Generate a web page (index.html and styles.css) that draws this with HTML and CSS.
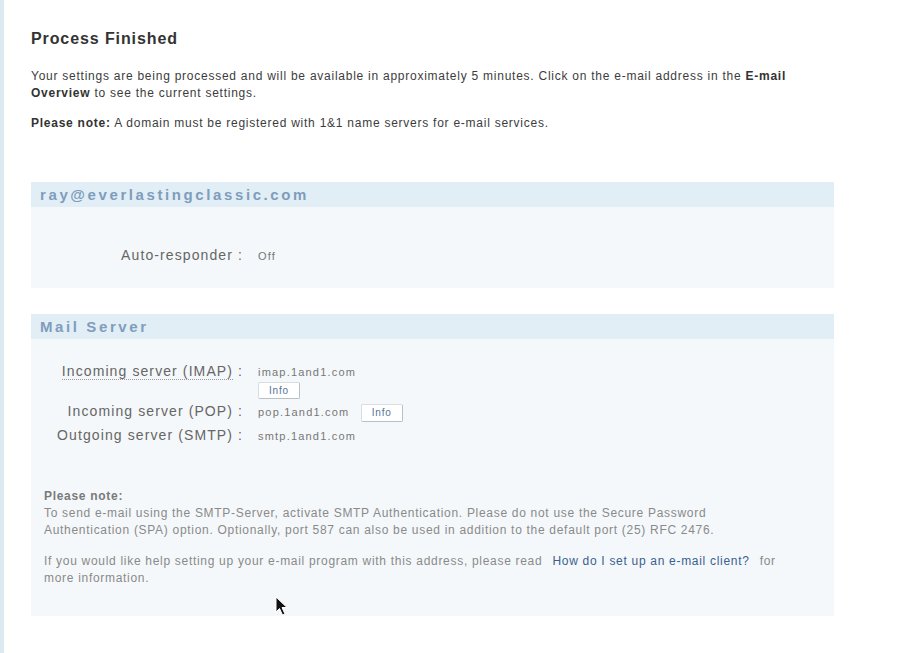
FILE: index.html
```html
<!DOCTYPE html>
<html>
<head>
<meta charset="utf-8">
<link rel="stylesheet" href="styles.css">
</head>
<body>
<div class="page">
  <div class="strip"></div>
  <main class="main">
    <h1 class="title">Process Finished</h1>
    <p class="txt"><span>Your settings are being processed and will be available in approximately 5 minutes. Click on the e-mail address in the</span> <b>E-mail</b><br><b>Overview</b> <span>to see the current settings.</span></p>
    <p class="txt txt2"><b>Please note:</b> <span>A domain must be registered with 1&amp;1 name servers for e-mail services.</span></p>

    <section class="box box1">
      <div class="box-head">ray@everlastingclassic.com</div>
      <div class="box-body body1">
        <div class="grid">
          <div class="lbl">Auto-responder :</div>
          <div class="val">Off</div>
        </div>
      </div>
    </section>

    <section class="box box2">
      <div class="box-head">Mail Server</div>
      <div class="box-body body2">
        <div class="grid">
          <div class="lbl"><span class="dotted">Incoming server (IMAP)</span> :</div>
          <div class="val">imap.1and1.com<div class="btnline"><span class="btn">Info</span></div></div>
          <div class="lbl">Incoming server (POP) :</div>
          <div class="val">pop.1and1.com <span class="btn btn-inline">Info</span></div>
          <div class="lbl">Outgoing server (SMTP) :</div>
          <div class="val">smtp.1and1.com</div>
        </div>
        <div class="note">
          <p class="note-p"><b>Please note:</b><br><span>To send e-mail using the SMTP-Server, activate SMTP Authentication. Please do not use the Secure Password</span><br><span>Authentication (SPA) option. Optionally, port 587 can also be used in addition to the default port (25) RFC 2476.</span></p>
          <p class="note-p note-p2"><span>If you would like help setting up your e-mail program with this address, please read</span> <a class="link" href="#">How do I set up an e-mail client?</a> <span>for</span><br><span>more information.</span></p>
        </div>
      </div>
    </section>
  </main>
</div>
<svg class="cursor" width="14" height="22" viewBox="0 0 14 22"><path d="M1 1 L1 16 L4.5 12.5 L7.5 19 L10 18 L7 11.5 L12 11.5 Z" fill="#111" stroke="#fff" stroke-width="1"/></svg>
</body>
</html>
```

FILE: styles.css
```css
html, body {
  margin: 0;
  padding: 0;
  background: #ffffff;
}
body {
  font-family: "Liberation Sans", Arial, sans-serif;
  color: #333;
  position: relative;
}
.page {
  display: flex;
  min-height: 653px;
}
.strip {
  width: 4px;
  background: #dde9f1;
  flex: none;
}
.main {
  padding-left: 27px;
  padding-top: 29px;
  width: 803px;
}
.title {
  margin: 0;
  font-size: 16px;
  line-height: 20px;
  letter-spacing: 0.9px;
  font-weight: bold;
  color: #333;
}
.txt {
  margin: 19px 0 0 0;
  font-size: 12px;
  line-height: 17px;
  letter-spacing: 0.75px;
  color: #3c3c3c;
}
.txt b { color: #333; }
.txt2 { margin-top: 13px; }

.box {
  width: 803px;
}
.box1 { margin-top: 50px; }
.box2 { margin-top: 26px; }
.box-head {
  height: 25px;
  line-height: 25px;
  background: #e2eef5;
  color: #7e9dbd;
  font-weight: bold;
  font-size: 15px;
  letter-spacing: 2.6px;
  padding-left: 9px;
}
.box-body {
  background: #f4f8fa;
}
.body1 {
  padding: 37px 0 20px 0;
}
.body2 {
  padding: 21px 0 29px 0;
}
.grid {
  display: grid;
  grid-template-columns: 212px 1fr;
  column-gap: 15px;
  align-items: baseline;
}
.lbl {
  text-align: right;
  font-size: 14px;
  line-height: 23px;
  letter-spacing: 1.1px;
  color: #666;
  white-space: nowrap;
}
.dotted {
  border-bottom: 1px dotted #999;
}
.val {
  font-size: 11px;
  line-height: 23px;
  letter-spacing: 1.2px;
  color: #777;
}
.btnline {
  height: 18px;
  line-height: 16px;
  margin-top: -2px;
}
.btn {
  display: inline-block;
  height: 15px;
  line-height: 15px;
  padding: 0 10px;
  background: #fff;
  border: 1px solid #d6dde3;
  border-right-color: #b7c0c8;
  border-bottom-color: #b7c0c8;
  border-radius: 2px;
  font-size: 10px;
  letter-spacing: 0.8px;
  color: #55749a;
}
.btn-inline {
  margin-left: 7px;
  height: 16px;
  line-height: 16px;
  vertical-align: middle;
}
.note {
  margin-top: 40px;
  padding-left: 13px;
  width: 770px;
}
.note-p {
  margin: 0;
  font-size: 12px;
  line-height: 17px;
  letter-spacing: 0.7px;
  color: #8a8a8a;
  white-space: nowrap;
}
.note-p b {
  color: #7a7a7a;
}
.note-p2 {
  margin-top: 14px;
}
.link {
  color: #3a6090;
  text-decoration: none;
  margin: 0 6px;
}
.cursor {
  position: absolute;
  left: 275px;
  top: 596px;
}
```
